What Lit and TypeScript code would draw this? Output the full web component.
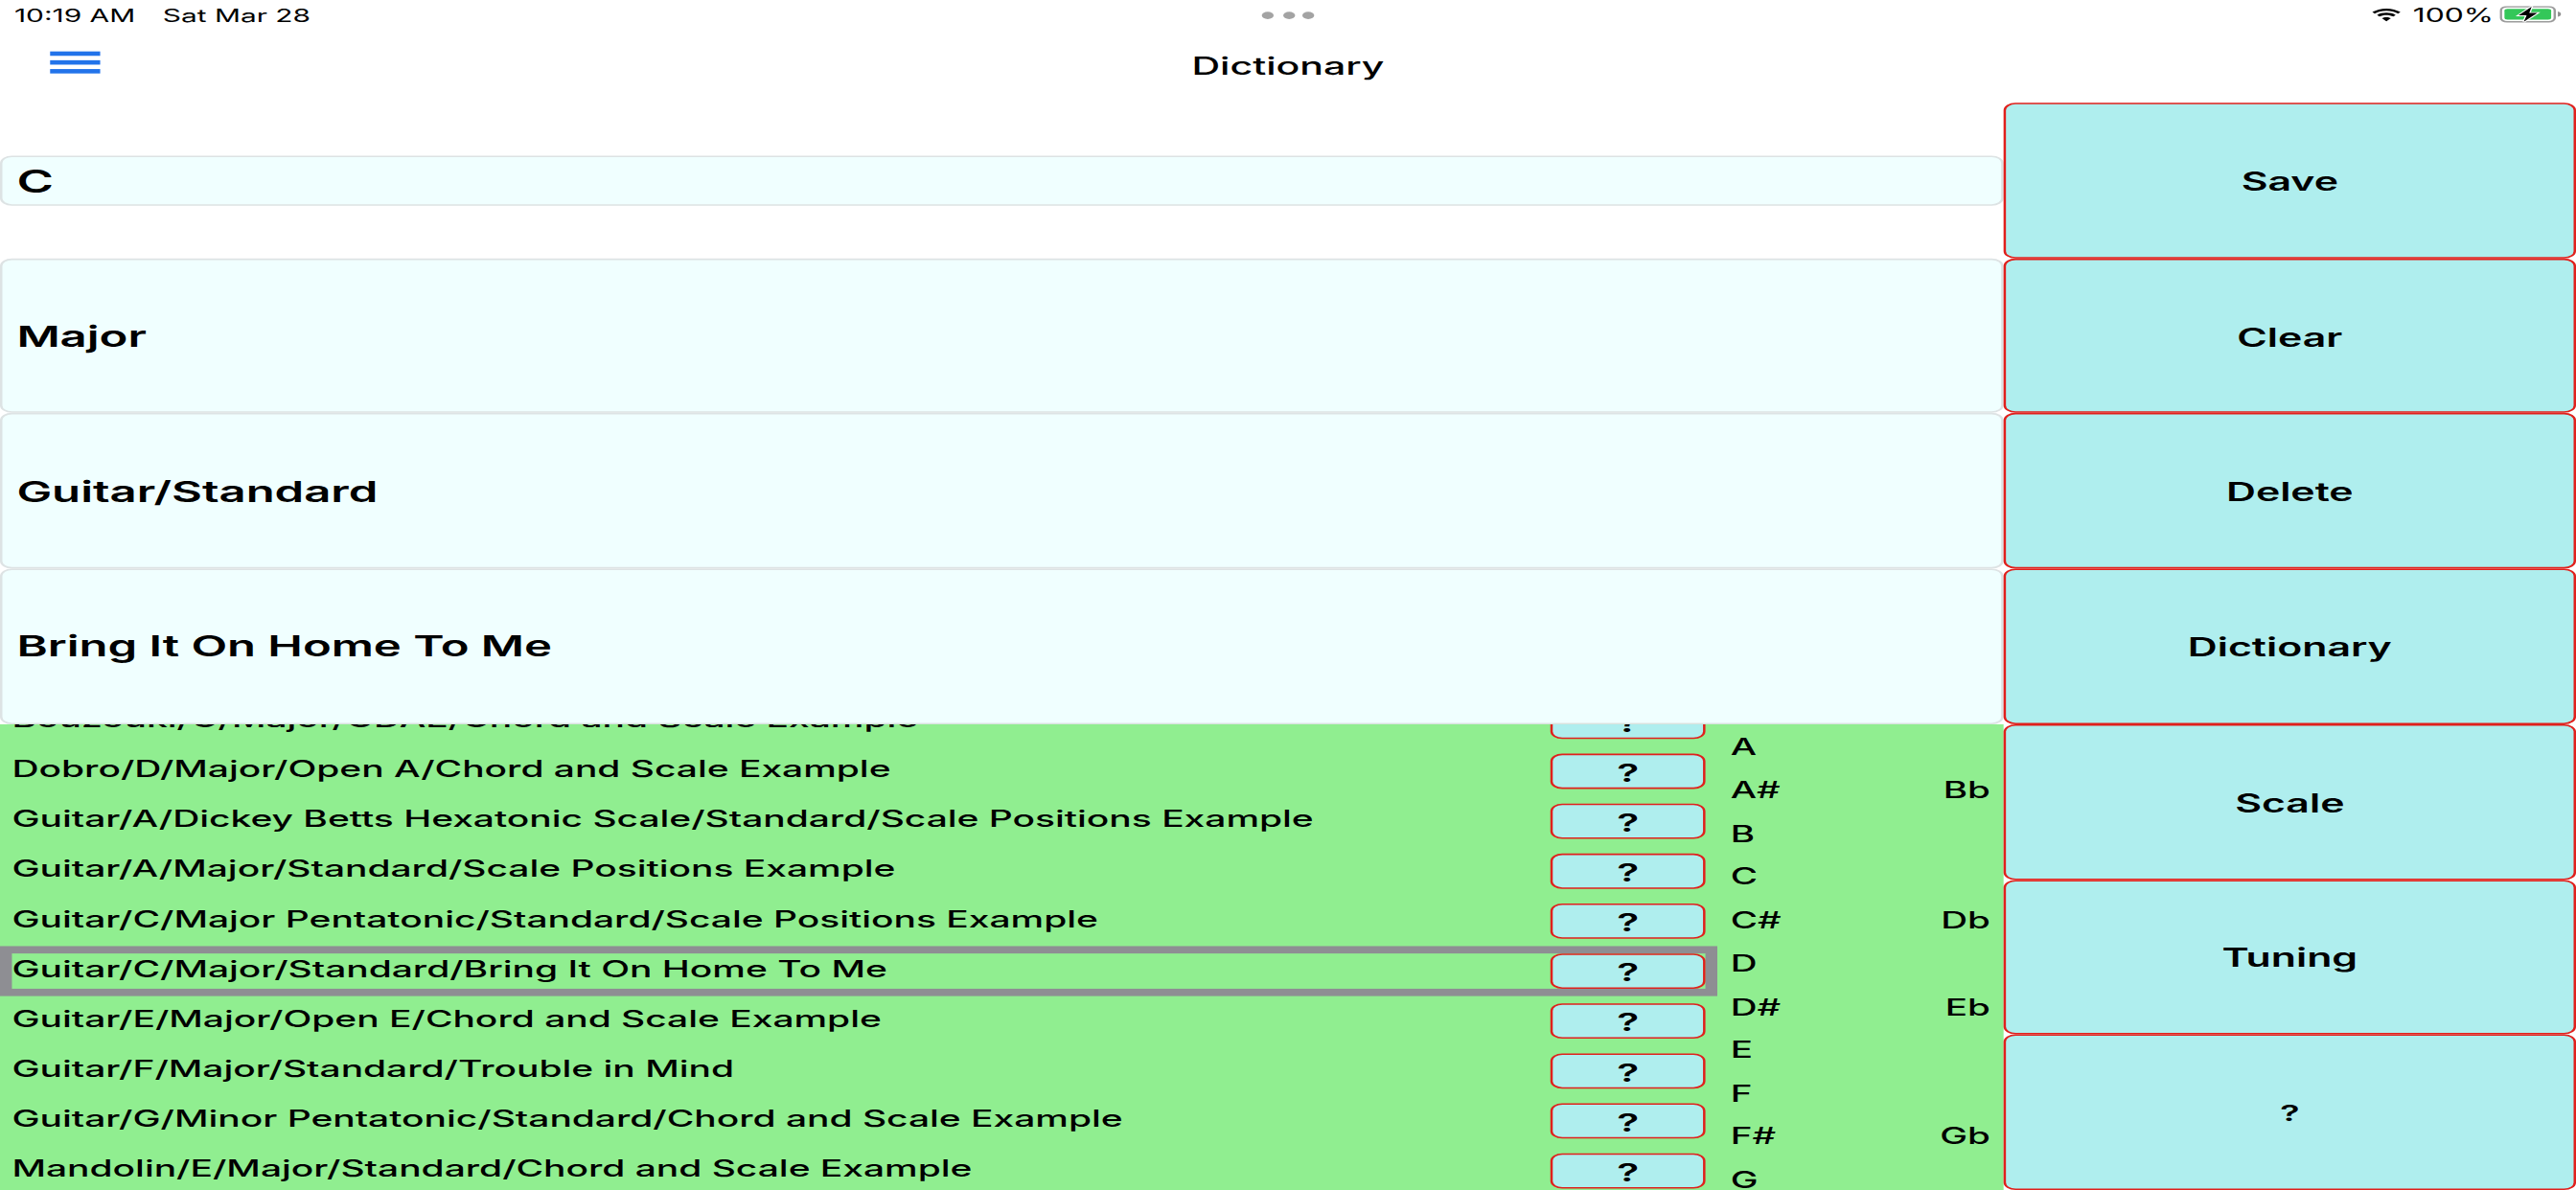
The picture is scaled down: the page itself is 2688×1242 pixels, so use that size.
import { LitElement, html, css, svg } from "lit";
import { customElement } from "lit/decorators.js";

const ROWS: string[] = [
  "Bouzouki/C/Major/GDAE/Chord and Scale Example",
  "Dobro/D/Major/Open A/Chord and Scale Example",
  "Guitar/A/Dickey Betts Hexatonic Scale/Standard/Scale Positions Example",
  "Guitar/A/Major/Standard/Scale Positions Example",
  "Guitar/C/Major Pentatonic/Standard/Scale Positions Example",
  "Guitar/C/Major/Standard/Bring It On Home To Me",
  "Guitar/E/Major/Open E/Chord and Scale Example",
  "Guitar/F/Major/Standard/Trouble in Mind",
  "Guitar/G/Minor Pentatonic/Standard/Chord and Scale Example",
  "Mandolin/E/Major/Standard/Chord and Scale Example",
];
const SELECTED = 5;
const NOTES: [string, string][] = [
  ["A", ""], ["A#", "Bb"], ["B", ""], ["C", ""], ["C#", "Db"], ["D", ""],
  ["D#", "Eb"], ["E", ""], ["F", ""], ["F#", "Gb"], ["G", ""],
];
const FIELDS = ["Major", "Guitar/Standard", "Bring It On Home To Me"];
const ACTIONS = ["Save", "Clear", "Delete", "Dictionary", "Scale", "Tuning"];

const wifi = svg`<svg class="wifi" viewBox="0 0 14 10.4"><path d="M7 2.4c1.9 0 3.6.7 4.9 1.9l1-1.1C11.3 1.7 9.3.8 7 .8S2.7 1.7 1.1 3.2l1 1.1C3.4 3.1 5.1 2.4 7 2.4z"/><path d="M7 5.2c1.1 0 2.1.4 2.9 1.1l1-1.1C9.9 4.2 8.5 3.7 7 3.7s-2.9.5-3.9 1.5l1 1.1C4.9 5.6 5.9 5.2 7 5.2z"/><path d="M7 6.7c-.7 0-1.4.3-1.9.7L7 9.6l1.9-2.2C8.4 7 7.7 6.7 7 6.7z"/></svg>`;
const battery = svg`<svg class="battery" viewBox="0 0 27 11.4"><rect x=".5" y=".5" width="22.6" height="10.4" rx="2.6" fill="none" stroke="#9b9b9b"/><rect x="2" y="2" width="19.6" height="7.4" rx="1.3" fill="#34c759"/><path d="M24.4 3.9c.9.3 1.3 1 1.3 1.8s-.4 1.5-1.3 1.8z" fill="#8f8f8f"/><path d="M13.4.5 7.9 6.5h3.4l-1.2 4.4 5.7-6.1h-3.4z" fill="#000" stroke="#fff" stroke-width="1.1" paint-order="stroke"/></svg>`;

@customElement("app-root")
export class AppRoot extends LitElement {
  static styles = css`
    :host {
      display: block;
      width: 2688px;
      height: 1242px;
      overflow: hidden;
      background: #fff;
      color: #000;
      font-family: Inter, "Liberation Sans", sans-serif;
    }
    .stage {
      width: 1080px;
      height: 810px;
      transform-origin: 0 0;
      transform: scale(2.48889, 1.53333);
    }
    .status {
      height: 20px;
      display: grid;
      grid-template-columns: 1fr auto 1fr;
      align-items: center;
      padding: 0 5.5px 0 6px;
      font-size: 12px;
      font-weight: 400;
    }
    .status-left { display: flex; gap: 11.5px; }
    .status-right { display: flex; justify-content: flex-end; align-items: center; gap: 4px; font-size: 12.8px; }
    .wifi { width: 15px; height: 10.4px; fill: #000; }
    .battery { width: 27px; height: 11.4px; margin-left: -2px; }
    .dots { display: flex; gap: 3.4px; }
    .dots i { width: 5px; height: 5px; border-radius: 50%; background: #a3a3a3; }
    .nav {
      height: 50px;
      display: grid;
      grid-template-columns: 1fr auto 1fr;
      align-items: center;
      font-size: 16.5px;
      font-weight: 500;
    }
    .burger {
      display: flex;
      flex-direction: column;
      gap: 2.8px;
      width: 21px;
      margin: -5px 0 0 21px;
    }
    .burger i { display: block; height: 3.2px; background: #2273ea; }
    .main { display: flex; height: 740px; }
    .left { width: 840px; display: flex; flex-direction: column; }
    .right { width: 240px; display: flex; flex-direction: column; }
    .slot { height: 105.714px; display: flex; align-items: center; }
    .field {
      box-sizing: border-box;
      width: 100%;
      display: flex;
      align-items: center;
      background: #f0ffff;
      border: 1px solid #dde3e4;
      border-radius: 5px;
      padding: 1px 0 0 6px;
      font-size: 19.7px;
      font-weight: 600;
    }
    .field.tall { height: 105.714px; }
    .field.short { height: 34px; font-size: 21px; }
    .lower {
      flex: 1;
      min-height: 0;
      display: flex;
      background: #90ee90;
      overflow: hidden;
    }
    .list { width: 720px; margin-top: -18.4px; flex: none; }
    .row {
      box-sizing: border-box;
      height: 34px;
      display: flex;
      align-items: center;
      justify-content: space-between;
      border: 5px solid transparent;
      font-size: 15.65px;
      font-weight: 500;
    }
    .row.selected { border-color: #8e8e93; }
    .row span { margin-top: -4px; white-space: nowrap; }
    .help {
      box-sizing: border-box;
      width: 65px;
      height: 24px;
      display: flex;
      align-items: center;
      justify-content: center;
      background: #afeeee;
      border: 1px solid #e0201c;
      border-radius: 5px;
      padding-top: 1px;
      font-size: 17px;
      font-weight: 600;
    }
    .notes { width: 120px; flex: none; padding-top: 0.5px; }
    .note {
      height: 29.5px;
      display: flex;
      align-items: center;
      justify-content: space-between;
      padding: 0 5.5px;
      font-size: 15.5px;
      font-weight: 500;
    }
    .action {
      box-sizing: border-box;
      height: 105.714px;
      display: flex;
      align-items: center;
      justify-content: center;
      background: #afeeee;
      border: 1px solid #e0201c;
      border-radius: 5px;
      padding-top: 1.2px;
      font-size: 17.2px;
      font-weight: 600;
    }
    .action.small { font-size: 15px; }
  `;

  render() {
    return html`
      <div class="stage">
        <div class="status">
          <div class="status-left"><span>10:19 AM</span><span>Sat Mar 28</span></div>
          <div class="dots"><i></i><i></i><i></i></div>
          <div class="status-right">${wifi}<span>100%</span>${battery}</div>
        </div>
        <div class="nav">
          <div class="burger"><i></i><i></i><i></i></div>
          <div>Dictionary</div>
          <div></div>
        </div>
        <div class="main">
          <div class="left">
            <div class="slot"><div class="field short">C</div></div>
            ${FIELDS.map((f) => html`<div class="field tall">${f}</div>`)}
            <div class="lower">
              <div class="list">
                ${ROWS.map(
                  (r, i) => html`<div class="row ${i === SELECTED ? "selected" : ""}">
                    <span>${r}</span><div class="help">?</div>
                  </div>`
                )}
              </div>
              <div class="notes">
                ${NOTES.map(([a, b]) => html`<div class="note"><span>${a}</span><span>${b}</span></div>`)}
              </div>
            </div>
          </div>
          <div class="right">
            ${ACTIONS.map((a) => html`<div class="action">${a}</div>`)}
            <div class="action small">?</div>
          </div>
        </div>
      </div>
    `;
  }
}
